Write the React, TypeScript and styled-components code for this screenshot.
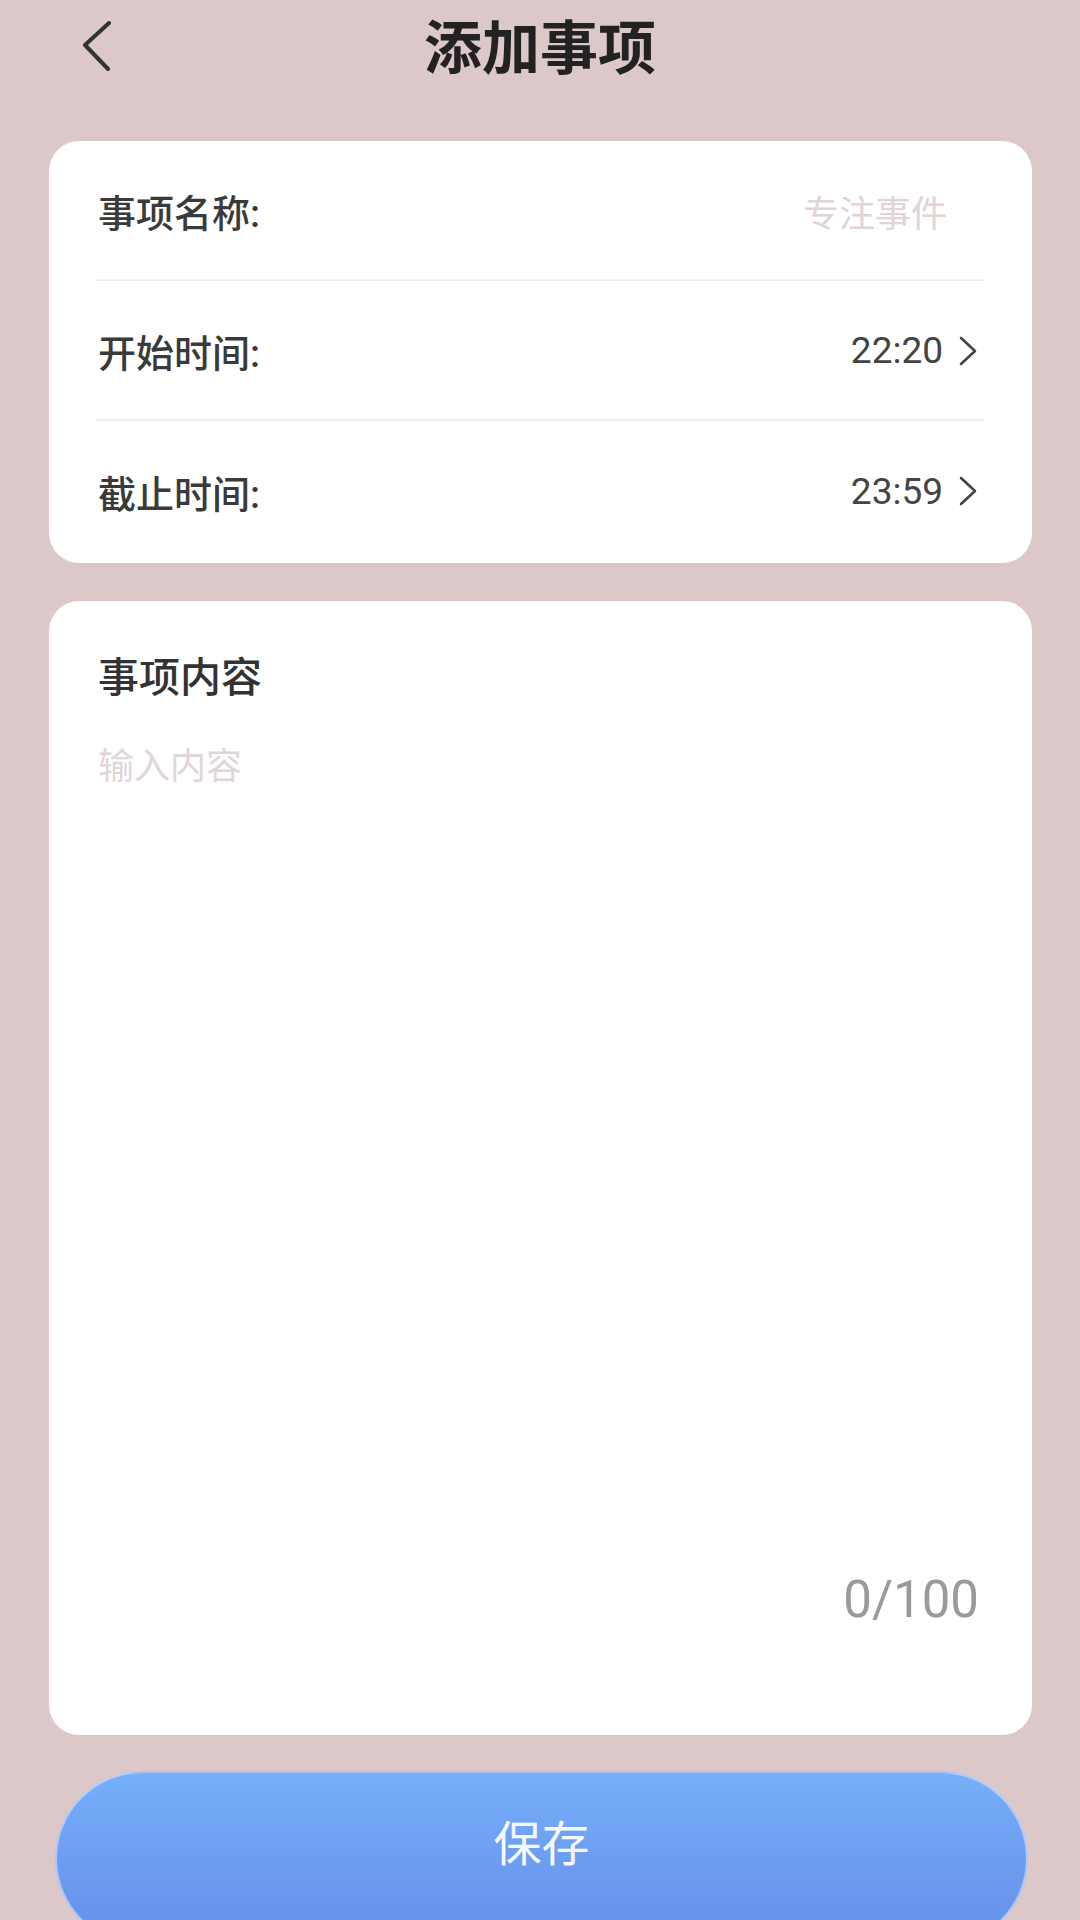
import React from "react";
import styled, { createGlobalStyle } from "styled-components";

const GlobalStyle = createGlobalStyle`
  html, body {
    margin: 0;
    padding: 0;
    background: #dcc7c9;
  }
  body {
    font-family: Roboto, "Noto Sans CJK SC", "Noto Sans", sans-serif;
  }
  * { box-sizing: border-box; }
`;

const Page = styled.div`
  width: 1080px;
  height: 1920px;
  overflow: hidden;
  background: #dcc7c9;
  display: flex;
  flex-direction: column;
`;

const Header = styled.header`
  height: 88px;
  flex-shrink: 0;
  display: grid;
  grid-template-columns: 1fr auto 1fr;
  align-items: center;
  padding: 0 0 0 82px;
`;

const BackButton = styled.button`
  justify-self: start;
  width: 30px;
  height: 52px;
  padding: 0;
  margin-top: 6px;
  border: none;
  background: transparent;
  display: flex;
  align-items: center;
  justify-content: center;
`;

const Title = styled.h1`
  margin: 0;
  font-family: "Noto Sans CJK SC", sans-serif;
  font-size: 58px;
  font-weight: 700;
  color: #222;
  line-height: 1;
  transform: translateX(-41px);
`;

const Card = styled.section`
  flex-shrink: 0;
  margin: 0 48px 0 49px;
  background: #ffffff;
  border-radius: 30px;
  padding: 0 47px;
  display: flex;
  flex-direction: column;
`;

const InfoCard = styled(Card)`
  margin-top: 53px;
  padding-bottom: 2px;
`;

const ContentCard = styled(Card)`
  margin-top: 38px;
  height: 1134px;
  padding-top: 43px;
  padding-bottom: 110px;
`;

const Row = styled.div<{ $last?: boolean }>`
  height: 140px;
  display: flex;
  align-items: center;
  justify-content: space-between;
  padding: 0 8px 0 2px;
  border-bottom: ${(p) => (p.$last ? "none" : "1px solid #f1ebec")};
  box-shadow: ${(p) => (p.$last ? "none" : "inset 0 -16px 0 -15px #f7f3f4")};
`;

const Label = styled.span`
  font-family: Roboto, "Noto Sans CJK SC", sans-serif;
  font-size: 38px;
  font-weight: 500;
  color: #3a3a3a;
`;

const NameInput = styled.input`
  border: none;
  outline: none;
  background: transparent;
  text-align: right;
  width: 400px;
  margin-right: 30px;
  font-family: "Noto Sans CJK SC", sans-serif;
  font-size: 36px;
  color: #333;
  padding: 0;
  &::placeholder {
    color: #e1d3d6;
  }
`;

const Value = styled.span`
  display: flex;
  align-items: center;
  gap: 16px;
  font-family: Roboto, sans-serif;
  font-size: 37px;
  color: #444;
`;

const SectionTitle = styled.h2`
  margin: 0 0 0 2px;
  font-family: "Noto Sans CJK SC", sans-serif;
  font-size: 41px;
  font-weight: 500;
  color: #333;
  line-height: 60px;
`;

const TextArea = styled.textarea`
  flex: 1;
  margin: 33px 0 0 2px;
  border: none;
  outline: none;
  resize: none;
  background: transparent;
  padding: 0;
  font-family: "Noto Sans CJK SC", sans-serif;
  font-size: 36px;
  line-height: 52px;
  color: #333;
  &::placeholder {
    color: #e2d5d8;
  }
`;

const Counter = styled.div`
  align-self: flex-end;
  margin-right: 6px;
  font-family: Roboto, sans-serif;
  font-size: 51px;
  color: #9a9a9a;
  line-height: 1;
`;

const SaveButton = styled.button`
  margin: 36px 52px 0 55px;
  height: 175px;
  flex-shrink: 0;
  border: 2px solid rgba(220, 228, 250, 0.6);
  border-radius: 88px;
  background: linear-gradient(180deg, #76b0fa 0%, #6e9ff2 45%, #6590ea 100%);
  color: #f6f8ff;
  font-family: "Noto Sans CJK SC", sans-serif;
  font-size: 48px;
  padding: 0 0 38px;
  display: flex;
  align-items: center;
  justify-content: center;
`;

const Chevron = () => (
  <svg width={18} height={30} viewBox="0 0 18 30" fill="none">
    <path d="M2 2 L16 15 L2 28" stroke="#444" strokeWidth="2.6" strokeLinecap="round" strokeLinejoin="round" />
  </svg>
);

export default function App() {
  return (
    <Page>
      <GlobalStyle />
      <Header>
        <BackButton aria-label="返回">
          <svg width="30" height="52" viewBox="0 0 30 52" fill="none">
            <path d="M27 2 L3 24 L26 48" stroke="#333" strokeWidth="4" strokeLinecap="round" strokeLinejoin="round" />
          </svg>
        </BackButton>
        <Title>添加事项</Title>
        <span />
      </Header>

      <InfoCard>
        <Row>
          <Label>事项名称:</Label>
          <NameInput placeholder="专注事件" />
        </Row>
        <Row>
          <Label>开始时间:</Label>
          <Value>
            22:20
            <Chevron />
          </Value>
        </Row>
        <Row $last>
          <Label>截止时间:</Label>
          <Value>
            23:59
            <Chevron />
          </Value>
        </Row>
      </InfoCard>

      <ContentCard>
        <SectionTitle>事项内容</SectionTitle>
        <TextArea placeholder="输入内容" />
        <Counter>0/100</Counter>
      </ContentCard>

      <SaveButton>保存</SaveButton>
    </Page>
  );
}
